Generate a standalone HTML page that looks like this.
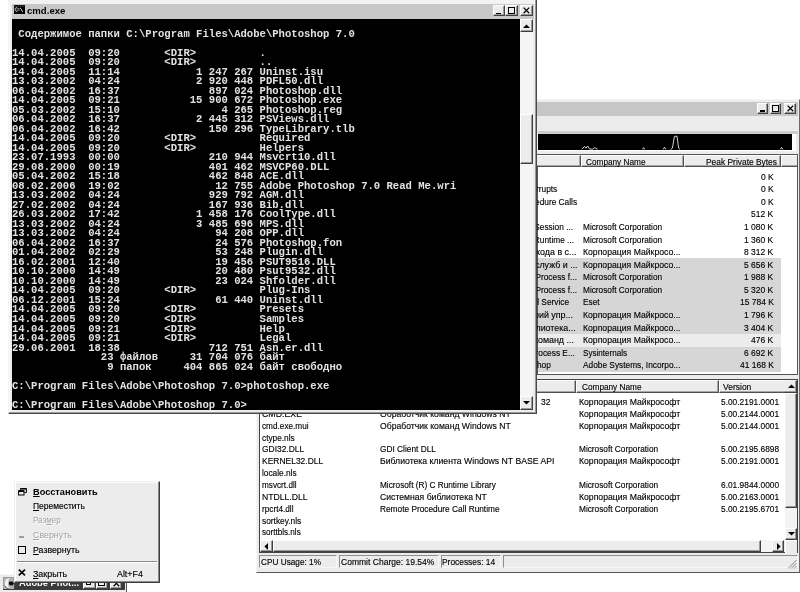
<!DOCTYPE html><html><head><meta charset="utf-8"><title>screen</title><style>
*{box-sizing:border-box}
html,body{margin:0;padding:0}
body{-webkit-font-smoothing:antialiased;width:800px;height:592px;overflow:hidden;background:#fff;position:relative;font-family:"Liberation Sans",sans-serif;font-size:9.3px;color:#000}
.a{position:absolute}
.t{position:absolute;white-space:nowrap;line-height:12px;height:12px;transform-origin:0 0;-webkit-text-stroke:0.15px #000}
.btn{position:absolute;background:#ececec;border-top:1px solid #fff;border-left:1px solid #fff;border-right:1px solid #404040;border-bottom:1px solid #404040;box-shadow:inset -1px -1px 0 #9a9a9a}
.hd{position:absolute;background:#ececec;border-top:1px solid #fff;border-left:1px solid #fff;border-right:1px solid #505050;border-bottom:1px solid #505050;box-shadow:inset -1px -1px 0 #a8a8a8}
#con{position:absolute;left:12.2px;top:19.3px;width:507.8px;height:390.3px;background:#000;overflow:hidden}
#con pre{margin:0;position:absolute;left:0px;top:1.2px;font-family:"Liberation Mono",monospace;font-weight:bold;font-size:10.58px;line-height:9.52px;color:#e2e2e2;letter-spacing:0px;transform:translateZ(0);will-change:transform}
</style></head><body>
<div class="a" id="pe" style="left:256.3px;top:98.5px;width:543.4px;height:474px;background:#ececec;border-top:1px solid #f6f6f6;border-left:1px solid #f6f6f6;border-right:1px solid #6a6a6a;border-bottom:1px solid #555"></div>
<div class="a" style="left:259.5px;top:102.2px;width:538.6px;height:13.6px;background:#c6c6c6"></div>
<div class="btn" style="left:757px;top:103.3px;width:10.8px;height:10.6px"></div>
<div class="btn" style="left:769.7px;top:103.3px;width:11.6px;height:10.6px"></div>
<div class="btn" style="left:784px;top:103.3px;width:12px;height:10.6px"></div>
<div class="a" style="left:759.8px;top:110.2px;width:4.8px;height:1.7px;background:#000"></div>
<div class="a" style="left:772px;top:105.2px;width:6.8px;height:6.6px;border:1px solid #000;border-top-width:1.8px"></div>
<svg class="a" style="left:786.5px;top:105.3px" width="7" height="7" viewBox="0 0 7 7"><path d="M0.6 0.6L6.2 6.2M6.2 0.6L0.6 6.2" stroke="#000" stroke-width="1.25" fill="none"/></svg>
<div class="a" style="left:538px;top:131.2px;width:260px;height:3.2px;background:#cdcdcd"></div>
<div class="a" style="left:538px;top:134.4px;width:253.6px;height:15.8px;background:#000"></div>
<div class="a" style="left:791.6px;top:134.4px;width:4.2px;height:16.6px;background:#fff"></div>
<div class="a" style="left:538px;top:150.2px;width:258px;height:1.2px;background:#fff"></div>
<svg class="a" style="left:538px;top:134.4px" width="254" height="16" viewBox="538 134.4 254 16"><path d="M582 149.6L584.5 146.8L586 148.6L587.6 146.4L589.6 149.4L592.5 149.6L594.6 148.2L597.6 149.6M642.4 149.8L643.6 148L644.8 149.8M663.2 149.8L664.5 147.6L665.8 149.8M670.6 149.8L672.4 148.6L674.4 136.8L677 136.6L678.6 148.4L680 149.8M780.4 149.8L781.6 147.8L782.8 149.8" stroke="#e8e8e8" stroke-width="0.9" fill="none"/></svg>
<div class="a" style="left:537.4px;top:153.6px;width:260.6px;height:221px;background:#fff;border:1px solid #555"></div>
<div class="hd" style="left:520px;top:154.6px;width:60.6px;height:12.8px"></div>
<div class="hd" style="left:580.6px;top:154.6px;width:103.6px;height:12.8px"></div>
<div class="hd" style="left:684.2px;top:154.6px;width:96.8px;height:12.8px"></div>
<div class="hd" style="left:781px;top:154.6px;width:16px;height:12.8px;border-right:none;box-shadow:inset 0 -1px 0 #a8a8a8"></div>
<div class="t" style="left:585.80px;top:155.60px;transform:scaleX(0.8404);font-size:9.8px;">Company Name</div>
<div class="t" style="left:705.90px;top:155.60px;transform:scaleX(0.8576);font-size:9.8px;">Peak Private Bytes</div>
<div class="a" style="left:538.4px;top:258.4px;width:242.6px;height:113.2px;background:#d6d6d6"></div>
<div class="a" style="left:538.4px;top:334.2px;width:242.6px;height:12.4px;background:#ececec"></div>
<div class="t" style="left:760.85px;top:170.60px;transform:scaleX(0.8670);font-size:9.8px;">0 K</div>
<div class="t" style="left:535.73px;top:183.18px;transform:scaleX(0.8493);font-size:9.8px;">rrupts</div>
<div class="t" style="left:760.85px;top:183.18px;transform:scaleX(0.8670);font-size:9.8px;">0 K</div>
<div class="t" style="left:535.20px;top:195.76px;transform:scaleX(0.8493);font-size:9.8px;">edure Calls</div>
<div class="t" style="left:760.85px;top:195.76px;transform:scaleX(0.8670);font-size:9.8px;">0 K</div>
<div class="t" style="left:751.40px;top:208.34px;transform:scaleX(0.8670);font-size:9.8px;">512 K</div>
<div class="t" style="left:521.38px;top:220.92px;transform:scaleX(0.8493);font-size:9.8px;">NT Session ...</div>
<div class="t" style="left:582.80px;top:220.92px;transform:scaleX(0.8444);font-size:9.8px;">Microsoft Corporation</div>
<div class="t" style="left:744.31px;top:220.92px;transform:scaleX(0.8670);font-size:9.8px;">1 080 K</div>
<div class="t" style="left:507.23px;top:233.50px;transform:scaleX(0.8493);font-size:9.8px;">Server Runtime ...</div>
<div class="t" style="left:582.80px;top:233.50px;transform:scaleX(0.8444);font-size:9.8px;">Microsoft Corporation</div>
<div class="t" style="left:744.31px;top:233.50px;transform:scaleX(0.8670);font-size:9.8px;">1 360 K</div>
<div class="t" style="left:530.58px;top:246.08px;transform:scaleX(0.9063);font-size:9.8px;">входа в с...</div>
<div class="t" style="left:582.80px;top:246.08px;transform:scaleX(0.8832);font-size:9.8px;">Корпорация Майкросо...</div>
<div class="t" style="left:744.31px;top:246.08px;transform:scaleX(0.8670);font-size:9.8px;">8 312 K</div>
<div class="t" style="left:535.11px;top:258.66px;transform:scaleX(0.9063);font-size:9.8px;">служб и ...</div>
<div class="t" style="left:582.80px;top:258.66px;transform:scaleX(0.8832);font-size:9.8px;">Корпорация Майкросо...</div>
<div class="t" style="left:744.31px;top:258.66px;transform:scaleX(0.8670);font-size:9.8px;">5 656 K</div>
<div class="t" style="left:515.65px;top:271.24px;transform:scaleX(0.8493);font-size:9.8px;">Host Process f...</div>
<div class="t" style="left:582.80px;top:271.24px;transform:scaleX(0.8444);font-size:9.8px;">Microsoft Corporation</div>
<div class="t" style="left:744.31px;top:271.24px;transform:scaleX(0.8670);font-size:9.8px;">1 988 K</div>
<div class="t" style="left:515.65px;top:283.82px;transform:scaleX(0.8493);font-size:9.8px;">Host Process f...</div>
<div class="t" style="left:582.80px;top:283.82px;transform:scaleX(0.8444);font-size:9.8px;">Microsoft Corporation</div>
<div class="t" style="left:744.31px;top:283.82px;transform:scaleX(0.8670);font-size:9.8px;">5 320 K</div>
<div class="t" style="left:514.88px;top:296.40px;transform:scaleX(0.8493);font-size:9.8px;">Kernel Service</div>
<div class="t" style="left:582.80px;top:296.40px;transform:scaleX(0.8465);font-size:9.8px;">Eset</div>
<div class="t" style="left:739.59px;top:296.40px;transform:scaleX(0.8670);font-size:9.8px;">15 784 K</div>
<div class="t" style="left:533.58px;top:308.98px;transform:scaleX(0.9063);font-size:9.8px;">рий упр...</div>
<div class="t" style="left:582.80px;top:308.98px;transform:scaleX(0.8832);font-size:9.8px;">Корпорация Майкросо...</div>
<div class="t" style="left:744.31px;top:308.98px;transform:scaleX(0.8670);font-size:9.8px;">1 796 K</div>
<div class="t" style="left:520.31px;top:321.56px;transform:scaleX(0.9063);font-size:9.8px;">Библиотека...</div>
<div class="t" style="left:582.80px;top:321.56px;transform:scaleX(0.8832);font-size:9.8px;">Корпорация Майкросо...</div>
<div class="t" style="left:744.31px;top:321.56px;transform:scaleX(0.8670);font-size:9.8px;">3 404 K</div>
<div class="t" style="left:534.27px;top:334.14px;transform:scaleX(0.9063);font-size:9.8px;">команд ...</div>
<div class="t" style="left:582.80px;top:334.14px;transform:scaleX(0.8832);font-size:9.8px;">Корпорация Майкросо...</div>
<div class="t" style="left:751.40px;top:334.14px;transform:scaleX(0.8670);font-size:9.8px;">476 K</div>
<div class="t" style="left:530.13px;top:346.72px;transform:scaleX(0.8493);font-size:9.8px;">Process E...</div>
<div class="t" style="left:582.80px;top:346.72px;transform:scaleX(0.8243);font-size:9.8px;">Sysinternals</div>
<div class="t" style="left:744.31px;top:346.72px;transform:scaleX(0.8670);font-size:9.8px;">6 692 K</div>
<div class="t" style="left:511.00px;top:359.30px;transform:scaleX(0.8493);font-size:9.8px;">Photoshop</div>
<div class="t" style="left:582.80px;top:359.30px;transform:scaleX(0.8484);font-size:9.8px;">Adobe Systems, Incorpo...</div>
<div class="t" style="left:739.59px;top:359.30px;transform:scaleX(0.8670);font-size:9.8px;">41 168 K</div>
<div class="a" style="left:259.4px;top:379.2px;width:538.6px;height:174px;background:#fff;border:1px solid #444;border-bottom-width:1.4px"></div>
<div class="hd" style="left:520px;top:380.4px;width:56px;height:12.6px"></div>
<div class="hd" style="left:576px;top:380.4px;width:143px;height:12.6px"></div>
<div class="hd" style="left:719px;top:380.4px;width:66.4px;height:12.6px;border-right:none;box-shadow:inset 0 -1px 0 #a8a8a8"></div>
<div class="t" style="left:582.30px;top:380.80px;transform:scaleX(0.8404);font-size:9.8px;">Company Name</div>
<div class="t" style="left:723.40px;top:380.80px;transform:scaleX(0.8670);font-size:9.8px;">Version</div>
<div class="a" style="left:785px;top:380.4px;width:12.2px;height:160px;background:#f4f4f4"></div>
<div class="btn" style="left:785px;top:380.4px;width:12.4px;height:12.6px;border-left:none;border-top-color:#f4f4f4"></div>
<svg class="a" style="left:787.6px;top:384.4px" width="7" height="4" viewBox="0 0 7 4"><path d="M0 4L3.5 0.4L7 4Z" fill="#000"/></svg>
<div class="btn" style="left:785px;top:393px;width:12.4px;height:115px;border-left-color:#f4f4f4"></div>
<div class="btn" style="left:785px;top:527.8px;width:12.4px;height:12.4px"></div>
<svg class="a" style="left:787.6px;top:532px" width="7" height="4" viewBox="0 0 7 4"><path d="M0 0L3.5 3.6L7 0Z" fill="#000"/></svg>
<div class="a" style="left:260.4px;top:540.2px;width:524.6px;height:11.8px;background:#ececec"></div>
<div class="btn" style="left:260.4px;top:540.2px;width:12.4px;height:11.8px"></div>
<svg class="a" style="left:264px;top:542.6px" width="4" height="7" viewBox="0 0 4 7"><path d="M4 0L0.4 3.5L4 7Z" fill="#000"/></svg>
<div class="btn" style="left:272.8px;top:540.2px;width:488px;height:11.8px"></div>
<div class="a" style="left:760.8px;top:540.2px;width:11.4px;height:11.8px;background:#f4f4f4"></div>
<div class="btn" style="left:772.2px;top:540.2px;width:12.2px;height:11.8px"></div>
<svg class="a" style="left:777px;top:542.6px" width="4" height="7" viewBox="0 0 4 7"><path d="M0 0L3.6 3.5L0 7Z" fill="#000"/></svg>
<div class="a" style="left:784.6px;top:540.2px;width:12.6px;height:12.4px;background:#ececec;border-left:1px solid #fff;border-top:1px solid #fff"></div>
<div class="t" style="left:578.80px;top:396.10px;transform:scaleX(0.8834);font-size:9.8px;">Корпорация Майкрософт</div>
<div class="t" style="left:720.60px;top:396.10px;transform:scaleX(0.8530);font-size:9.8px;">5.00.2191.0001</div>
<div class="t" style="left:540.50px;top:396.10px;transform:scaleX(0.8670);font-size:9.8px;">32</div>
<div class="t" style="left:262.30px;top:407.94px;transform:scaleX(0.8958);font-size:9.8px;">CMD.EXE</div>
<div class="t" style="left:380.40px;top:407.94px;transform:scaleX(0.8809);font-size:9.8px;">Обработчик команд Windows NT</div>
<div class="t" style="left:578.80px;top:407.94px;transform:scaleX(0.8834);font-size:9.8px;">Корпорация Майкрософт</div>
<div class="t" style="left:720.60px;top:407.94px;transform:scaleX(0.8530);font-size:9.8px;">5.00.2144.0001</div>
<div class="t" style="left:262.30px;top:419.78px;transform:scaleX(0.8389);font-size:9.8px;">cmd.exe.mui</div>
<div class="t" style="left:380.40px;top:419.78px;transform:scaleX(0.8809);font-size:9.8px;">Обработчик команд Windows NT</div>
<div class="t" style="left:578.80px;top:419.78px;transform:scaleX(0.8834);font-size:9.8px;">Корпорация Майкрософт</div>
<div class="t" style="left:720.60px;top:419.78px;transform:scaleX(0.8530);font-size:9.8px;">5.00.2144.0001</div>
<div class="t" style="left:262.30px;top:431.62px;transform:scaleX(0.8456);font-size:9.8px;">ctype.nls</div>
<div class="t" style="left:262.30px;top:443.46px;transform:scaleX(0.8608);font-size:9.8px;">GDI32.DLL</div>
<div class="t" style="left:380.40px;top:443.46px;transform:scaleX(0.8483);font-size:9.8px;">GDI Client DLL</div>
<div class="t" style="left:578.80px;top:443.46px;transform:scaleX(0.8444);font-size:9.8px;">Microsoft Corporation</div>
<div class="t" style="left:720.60px;top:443.46px;transform:scaleX(0.8530);font-size:9.8px;">5.00.2195.6898</div>
<div class="t" style="left:262.30px;top:455.30px;transform:scaleX(0.8642);font-size:9.8px;">KERNEL32.DLL</div>
<div class="t" style="left:380.40px;top:455.30px;transform:scaleX(0.8848);font-size:9.8px;">Библиотека клиента Windows NT BASE API</div>
<div class="t" style="left:578.80px;top:455.30px;transform:scaleX(0.8834);font-size:9.8px;">Корпорация Майкрософт</div>
<div class="t" style="left:720.60px;top:455.30px;transform:scaleX(0.8530);font-size:9.8px;">5.00.2191.0001</div>
<div class="t" style="left:262.30px;top:467.14px;transform:scaleX(0.8469);font-size:9.8px;">locale.nls</div>
<div class="t" style="left:262.30px;top:478.98px;transform:scaleX(0.8362);font-size:9.8px;">msvcrt.dll</div>
<div class="t" style="left:380.40px;top:478.98px;transform:scaleX(0.8413);font-size:9.8px;">Microsoft (R) C Runtime Library</div>
<div class="t" style="left:578.80px;top:478.98px;transform:scaleX(0.8444);font-size:9.8px;">Microsoft Corporation</div>
<div class="t" style="left:720.60px;top:478.98px;transform:scaleX(0.8530);font-size:9.8px;">6.01.9844.0000</div>
<div class="t" style="left:262.30px;top:490.82px;transform:scaleX(0.8813);font-size:9.8px;">NTDLL.DLL</div>
<div class="t" style="left:380.40px;top:490.82px;transform:scaleX(0.8823);font-size:9.8px;">Системная библиотека NT</div>
<div class="t" style="left:578.80px;top:490.82px;transform:scaleX(0.8834);font-size:9.8px;">Корпорация Майкрософт</div>
<div class="t" style="left:720.60px;top:490.82px;transform:scaleX(0.8530);font-size:9.8px;">5.00.2163.0001</div>
<div class="t" style="left:262.30px;top:502.66px;transform:scaleX(0.8383);font-size:9.8px;">rpcrt4.dll</div>
<div class="t" style="left:380.40px;top:502.66px;transform:scaleX(0.8478);font-size:9.8px;">Remote Procedure Call Runtime</div>
<div class="t" style="left:578.80px;top:502.66px;transform:scaleX(0.8444);font-size:9.8px;">Microsoft Corporation</div>
<div class="t" style="left:720.60px;top:502.66px;transform:scaleX(0.8530);font-size:9.8px;">5.00.2195.6701</div>
<div class="t" style="left:262.30px;top:514.50px;transform:scaleX(0.8524);font-size:9.8px;">sortkey.nls</div>
<div class="t" style="left:262.30px;top:526.34px;transform:scaleX(0.8263);font-size:9.8px;">sorttbls.nls</div>
<div class="a" style="left:259.4px;top:555px;width:77.6px;height:13.2px;border-top:1px solid #909090;border-left:1px solid #909090;border-right:1px solid #f8f8f8;border-bottom:1px solid #f6f6f6"></div>
<div class="t" style="left:261.10px;top:556.10px;transform:scaleX(0.8409);font-size:9.8px;">CPU Usage: 1%</div>
<div class="a" style="left:339.2px;top:555px;width:99.4px;height:13.2px;border-top:1px solid #909090;border-left:1px solid #909090;border-right:1px solid #f8f8f8;border-bottom:1px solid #f6f6f6"></div>
<div class="t" style="left:340.90px;top:556.10px;transform:scaleX(0.8705);font-size:9.8px;">Commit Charge: 19.54%</div>
<div class="a" style="left:440.6px;top:555px;width:60.4px;height:13.2px;border-top:1px solid #909090;border-left:1px solid #909090;border-right:1px solid #f8f8f8;border-bottom:1px solid #f6f6f6"></div>
<div class="t" style="left:442.30px;top:556.10px;transform:scaleX(0.8568);font-size:9.8px;">Processes: 14</div>
<div class="a" style="left:503px;top:555px;width:294.6px;height:13.2px;border-top:1px solid #909090;border-left:1px solid #909090;border-right:1px solid #f8f8f8;border-bottom:1px solid #f6f6f6"></div>
<svg class="a" style="left:787px;top:559px" width="10" height="10" viewBox="0 0 10 10"><path d="M9.5 1L1 9.5M9.5 4L4 9.5M9.5 7L7 9.5" stroke="#8a8a8a" stroke-width="1" fill="none"/></svg>
<div class="a" id="cmd" style="left:8.1px;top:-1px;width:529.3px;height:414.9px;background:#ececec;border-left:1px solid #f4f4f4;border-right:1px solid #4a4a4a;border-bottom:1px solid #4a4a4a;box-shadow:inset -1px -1px 0 #9a9a9a"></div>
<div class="a" style="left:9.2px;top:0px;width:1px;height:412px;background:#fbfbfb"></div>
<div class="a" style="left:9.2px;top:0px;width:526px;height:3.6px;background:#f2f2f2"></div>
<div class="a" style="left:11.6px;top:4.4px;width:522.4px;height:14.6px;background:#c8c8c8"></div>
<div class="a" style="left:13.9px;top:5px;width:11px;height:8.9px;background:#000"></div>
<svg class="a" style="left:13.9px;top:5px" width="11" height="8.9" viewBox="0 0 11 8.9"><path d="M0.4 1.2H10.6" stroke="#7a7a7a" stroke-width="0.7" stroke-dasharray="1.2 0.6"/><path d="M3.2 2.6C1.4 2.4 1 3.6 1.2 4.8C1.4 6.2 2.2 6.6 3.2 6.4" stroke="#dcdcdc" stroke-width="0.9" fill="none"/><path d="M2.6 3.8H5.8M2.6 5.2H5.6" stroke="#c8c8c8" stroke-width="0.7" fill="none"/><path d="M6 3L7.4 4.2L8 6.2L9 7" stroke="#e4e4e4" stroke-width="0.9" fill="none"/></svg>
<div class="t" style="left:27.10px;top:4.78px;transform:scaleX(1.0317);font-size:9.3px;font-weight:bold;-webkit-text-stroke:0;">cmd.exe</div>
<div class="btn" style="left:493.2px;top:5.4px;width:11.6px;height:11px"></div>
<div class="btn" style="left:505.4px;top:5.4px;width:12.4px;height:11px"></div>
<div class="btn" style="left:520px;top:5.4px;width:13px;height:11px"></div>
<div class="a" style="left:496px;top:12.6px;width:5px;height:1.7px;background:#000"></div>
<div class="a" style="left:508px;top:7.2px;width:7.4px;height:7px;border:1px solid #000;border-top-width:1.8px"></div>
<svg class="a" style="left:523px;top:7.4px" width="7" height="7" viewBox="0 0 7 7"><path d="M0.6 0.6L6.2 6.2M6.2 0.6L0.6 6.2" stroke="#000" stroke-width="1.25" fill="none"/></svg>
<div id="con"><pre>

 Содержимое папки C:\Program Files\Adobe\Photoshop 7.0

14.04.2005  09:20       &lt;DIR&gt;          .
14.04.2005  09:20       &lt;DIR&gt;          ..
14.04.2005  11:14            1 247 267 Uninst.isu
13.03.2002  04:24            2 920 448 PDFL50.dll
06.04.2002  16:37              897 024 Photoshop.dll
14.04.2005  09:21           15 900 672 Photoshop.exe
05.03.2002  15:10                4 265 Photoshop.reg
06.04.2002  16:37            2 445 312 PSViews.dll
06.04.2002  16:42              150 296 TypeLibrary.tlb
14.04.2005  09:20       &lt;DIR&gt;          Required
14.04.2005  09:20       &lt;DIR&gt;          Helpers
23.07.1993  00:00              210 944 Msvcrt10.dll
29.08.2000  00:19              401 462 MSVCP60.DLL
05.04.2002  15:18              462 848 ACE.dll
08.02.2006  19:02               12 755 Adobe Photoshop 7.0 Read Me.wri
13.03.2002  04:24              929 792 AGM.dll
27.02.2002  04:24              167 936 Bib.dll
26.03.2002  17:42            1 458 176 CoolType.dll
13.03.2002  04:24            3 485 696 MPS.dll
13.03.2002  04:24               94 208 OPP.dll
06.04.2002  16:37               24 576 Photoshop.fon
01.04.2002  02:29               53 248 Plugin.dll
16.02.2001  12:40               19 456 PSUT9516.DLL
10.10.2000  14:49               20 480 Psut9532.dll
10.10.2000  14:49               23 024 Shfolder.dll
14.04.2005  09:20       &lt;DIR&gt;          Plug-Ins
06.12.2001  15:24               61 440 Uninst.dll
14.04.2005  09:20       &lt;DIR&gt;          Presets
14.04.2005  09:20       &lt;DIR&gt;          Samples
14.04.2005  09:21       &lt;DIR&gt;          Help
14.04.2005  09:21       &lt;DIR&gt;          Legal
29.06.2001  18:38              712 751 Asn.er.dll
              23 файлов     31 704 076 байт
               9 папок     404 865 024 байт свободно

C:\Program Files\Adobe\Photoshop 7.0&gt;photoshop.exe

C:\Program Files\Adobe\Photoshop 7.0&gt;</pre></div>
<div class="a" style="left:520px;top:19.3px;width:13.2px;height:390.3px;background:#f5f5f5"></div>
<div class="btn" style="left:520px;top:19.3px;width:13.2px;height:13.2px"></div>
<svg class="a" style="left:523.2px;top:24px" width="7" height="4" viewBox="0 0 7 4"><path d="M0 4L3.5 0.4L7 4Z" fill="#000"/></svg>
<div class="btn" style="left:520px;top:114.3px;width:13.2px;height:49.6px"></div>
<div class="btn" style="left:520px;top:396.4px;width:13.2px;height:13.2px"></div>
<svg class="a" style="left:523.2px;top:401.4px" width="7" height="4" viewBox="0 0 7 4"><path d="M0 0L3.5 3.6L7 0Z" fill="#000"/></svg>
<div class="a" style="left:0px;top:574px;width:126.8px;height:19px;background:#ececec;border-top:1px solid #f8f8f8;border-right:1px solid #555"></div>
<div class="a" style="left:2.6px;top:576.6px;width:122.6px;height:13.2px;background:#3a3a3a"></div>
<div class="t" style="left:18.60px;top:577.27px;transform:scaleX(0.9700);font-size:9.6px;font-weight:bold;-webkit-text-stroke:0;color:#fff;-webkit-text-stroke:0">Adobe Phot...</div>
<svg class="a" style="left:3.4px;top:576.6px" width="11.2" height="12.8" viewBox="0 0 11.2 12.8"><rect x="0" y="0" width="11.2" height="12.8" fill="#8c8c8c"/><rect x="0.6" y="0.6" width="10" height="11.6" fill="#b4b4b4"/><path d="M6.2 1C3 1.6 1.6 4 2 7C2.4 9.8 4.2 11.6 6.8 11.8C5 9.8 4.8 7.8 5.2 5.6C5.4 4 5.8 2.4 6.2 1Z" fill="#f4f4f4"/><path d="M6.4 4.6L9.4 4.4L11 6.4L9.4 8.4L6.6 8.2L5.8 6.4Z" fill="#0a0a0a"/><path d="M2 9L4 11.6L7 12.2" stroke="#555" stroke-width="0.8" fill="none"/></svg>
<div class="btn" style="left:83.4px;top:577.8px;width:12.4px;height:10.8px"></div>
<div class="btn" style="left:95.6px;top:577.8px;width:12.4px;height:10.8px"></div>
<div class="btn" style="left:110px;top:577.8px;width:12.4px;height:10.8px"></div>
<div class="a" style="left:86.4px;top:580.4px;width:5px;height:4.6px;border:1px solid #000;border-top-width:1.6px"></div>
<div class="a" style="left:98.4px;top:579.8px;width:6.8px;height:6.4px;border:1px solid #000;border-top-width:1.8px"></div>
<svg class="a" style="left:112.8px;top:579.8px" width="7" height="7" viewBox="0 0 7 7"><path d="M0.6 0.6L6.2 6.2M6.2 0.6L0.6 6.2" stroke="#000" stroke-width="1.25" fill="none"/></svg>
<div class="a" style="left:14px;top:481.2px;width:146.4px;height:101.4px;background:#ececec;border-top:1px solid #f0f0f0;border-left:1px solid #f0f0f0;border-right:1.2px solid #3c3c3c;border-bottom:1.2px solid #3c3c3c;box-shadow:inset -1px -1px 0 #8c8c8c, inset 1px 1px 0 #fff"></div>
<div class="t" style="left:33.30px;top:486.08px;transform:scaleX(1.0215);font-size:9.0px;font-weight:bold;-webkit-text-stroke:0;"><u>В</u>осстановить</div>
<div class="t" style="left:33.30px;top:500.18px;transform:scaleX(0.9395);font-size:9.0px;"><u>П</u>ереместить</div>
<div class="t" style="left:33.30px;top:514.18px;transform:scaleX(0.8923);font-size:9.0px;color:#a0a0a0;text-shadow:0.8px 0.8px 0 #fff;-webkit-text-stroke:0;">Раз<u>м</u>ер</div>
<div class="t" style="left:33.30px;top:529.48px;transform:scaleX(0.9830);font-size:9.0px;color:#a0a0a0;text-shadow:0.8px 0.8px 0 #fff;-webkit-text-stroke:0;"><u>С</u>вернуть</div>
<div class="t" style="left:33.30px;top:544.28px;transform:scaleX(0.9769);font-size:9.0px;"><u>Р</u>азвернуть</div>
<div class="t" style="left:33.30px;top:567.88px;transform:scaleX(0.9867);font-size:9.0px;"><u>З</u>акрыть</div>
<div class="t" style="left:116.60px;top:567.88px;transform:scaleX(0.9824);font-size:9.0px;">Alt+F4</div>
<div class="a" style="left:17px;top:560.6px;width:140px;height:0.9px;background:#8c8c8c"></div>
<div class="a" style="left:17px;top:561.5px;width:140px;height:0.9px;background:#fff"></div>
<svg class="a" style="left:17.6px;top:488px" width="9" height="8" viewBox="0 0 9 8"><path d="M2.6 0.4H8.4V4.6H6.4M2.6 0.4V2.4" stroke="#000" stroke-width="1" fill="none"/><path d="M2.6 0.8H8.4" stroke="#000" stroke-width="1.6"/><rect x="0.6" y="2.8" width="5.4" height="4.2" stroke="#000" stroke-width="1" fill="none"/><path d="M0.6 3.2H6" stroke="#000" stroke-width="1.6"/></svg>
<div class="a" style="left:19.2px;top:536.2px;width:5px;height:1.4px;background:#9c9c9c"></div>
<div class="a" style="left:18px;top:546px;width:7.6px;height:7.6px;border:1px solid #000;border-top-width:1.8px"></div>
<svg class="a" style="left:18.4px;top:569.4px" width="8" height="7" viewBox="0 0 8 7"><path d="M0.8 0.6L7 6.4M7 0.6L0.8 6.4" stroke="#000" stroke-width="1.6" fill="none"/></svg>
</body></html>
